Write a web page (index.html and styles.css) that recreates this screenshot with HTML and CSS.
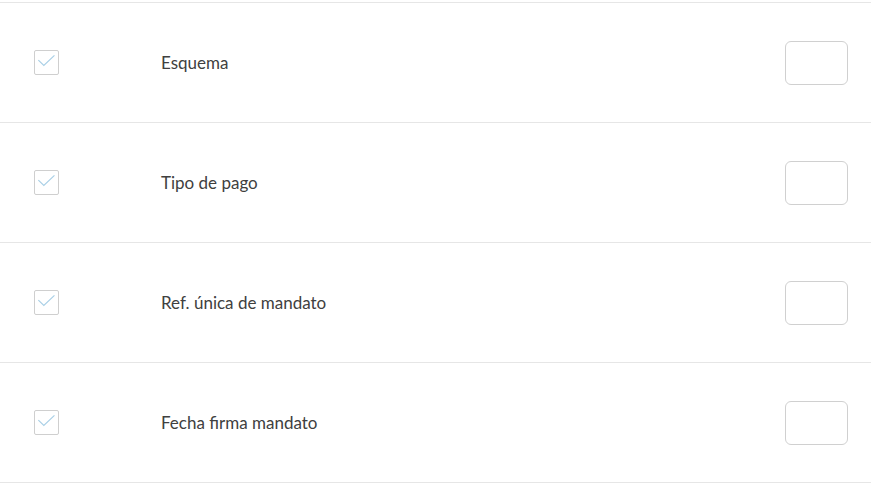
FILE: index.html
```html
<!DOCTYPE html>
<html lang="es">
<head>
<meta charset="utf-8">
<title>Campos</title>
<link rel="stylesheet" href="styles.css">
</head>
<body>
<div class="list">
  <div class="row">
    <span class="check"><svg viewBox="0 0 24 24" width="24" height="24"><path d="M3.5 9 L9.2 14.5 L20.3 4" fill="none" stroke="#a8cfe6" stroke-width="1.2"/></svg></span>
    <span class="label">Esquema</span>
    <span class="field"></span>
  </div>
  <div class="row">
    <span class="check"><svg viewBox="0 0 24 24" width="24" height="24"><path d="M3.5 9 L9.2 14.5 L20.3 4" fill="none" stroke="#a8cfe6" stroke-width="1.2"/></svg></span>
    <span class="label">Tipo de pago</span>
    <span class="field"></span>
  </div>
  <div class="row">
    <span class="check"><svg viewBox="0 0 24 24" width="24" height="24"><path d="M3.5 9 L9.2 14.5 L20.3 4" fill="none" stroke="#a8cfe6" stroke-width="1.2"/></svg></span>
    <span class="label">Ref. única de mandato</span>
    <span class="field"></span>
  </div>
  <div class="row">
    <span class="check"><svg viewBox="0 0 24 24" width="24" height="24"><path d="M3.5 9 L9.2 14.5 L20.3 4" fill="none" stroke="#a8cfe6" stroke-width="1.2"/></svg></span>
    <span class="label">Fecha firma mandato</span>
    <span class="field"></span>
  </div>
</div>
</body>
</html>
```
FILE: styles.css
```css
html, body {
  margin: 0;
  padding: 0;
  background: #ffffff;
}
body {
  font-family: "Source Sans Pro", "Lato", "Open Sans", sans-serif;
  color: #404040;
}
.list {
  padding-top: 2px;
}
.row {
  display: flex;
  align-items: center;
  height: 119px;
  border-top: 1px solid #e6e6e6;
}
.row:last-child {
  border-bottom: 1px solid #e6e6e6;
}
.check {
  box-sizing: border-box;
  width: 25px;
  height: 25px;
  margin-left: 34px;
  border: 1px solid #cfcfcf;
  border-radius: 2px;
  display: flex;
  align-items: center;
  justify-content: center;
}
.check svg {
  display: block;
}
.label {
  margin-left: 102px;
  font-size: 17px;
  flex: 1;
}
.field {
  box-sizing: border-box;
  width: 63px;
  height: 44px;
  margin-right: 23px;
  border: 1px solid #d0d0d0;
  border-radius: 6px;
}
```
